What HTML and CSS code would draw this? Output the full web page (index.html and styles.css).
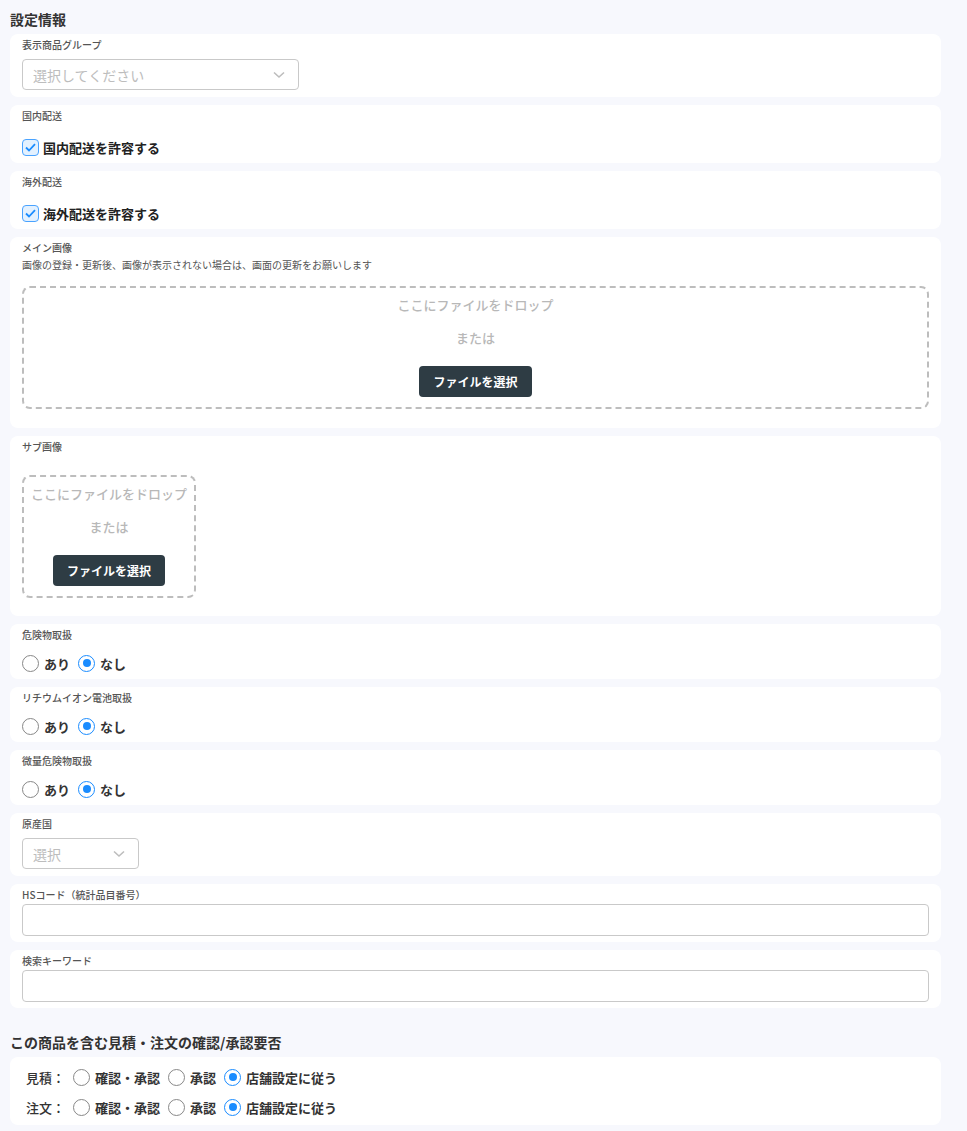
FILE: index.html
```html
<!DOCTYPE html>
<html lang="ja">
<head>
  <meta charset="UTF-8">
  <title>設定情報</title>
  <link rel="stylesheet" href="styles.css">
</head>
<body>

  <div class="page">
    <h2 class="section-title">設定情報</h2>

    <div class="card card-select">
      <div class="label">表示商品グループ</div>
      <div class="select select-wide">
        <span class="placeholder">選択してください</span>
        <svg class="chevron" width="12" height="8" viewBox="0 0 12 8"><path d="M1 1.5 L6 6 L11 1.5" fill="none" stroke="#bdbdbd" stroke-width="1.6"/></svg>
      </div>
    </div>

    <div class="card card-check">
      <div class="label">国内配送</div>
      <label class="check-row">
        <span class="checkbox"><svg width="11" height="9" viewBox="0 0 11 9"><path d="M1 4.5 L4 7.5 L10 1.2" fill="none" stroke="#1a8cff" stroke-width="1.8"/></svg></span>
        国内配送を許容する
      </label>
    </div>

    <div class="card card-check">
      <div class="label">海外配送</div>
      <label class="check-row">
        <span class="checkbox"><svg width="11" height="9" viewBox="0 0 11 9"><path d="M1 4.5 L4 7.5 L10 1.2" fill="none" stroke="#1a8cff" stroke-width="1.8"/></svg></span>
        海外配送を許容する
      </label>
    </div>

    <div class="card card-upload">
      <div class="label label-tight">メイン画像</div>
      <div class="note">画像の登録・更新後、画像が表示されない場合は、画面の更新をお願いします</div>
      <div class="dropzone">
        <p class="drop-text">ここにファイルをドロップ</p>
        <p class="drop-or">または</p>
        <button class="file-button">ファイルを選択</button>
      </div>
    </div>

    <div class="card card-upload card-sub">
      <div class="label">サブ画像</div>
      <div class="dropzone dropzone-small">
        <p class="drop-text">ここにファイルをドロップ</p>
        <p class="drop-or">または</p>
        <button class="file-button">ファイルを選択</button>
      </div>
    </div>

    <div class="card card-radio">
      <div class="label">危険物取扱</div>
      <div class="radio-row">
        <span class="radio"></span><span class="radio-text">あり</span>
        <span class="radio checked"></span><span class="radio-text">なし</span>
      </div>
    </div>

    <div class="card card-radio">
      <div class="label">リチウムイオン電池取扱</div>
      <div class="radio-row">
        <span class="radio"></span><span class="radio-text">あり</span>
        <span class="radio checked"></span><span class="radio-text">なし</span>
      </div>
    </div>

    <div class="card card-radio">
      <div class="label">微量危険物取扱</div>
      <div class="radio-row">
        <span class="radio"></span><span class="radio-text">あり</span>
        <span class="radio checked"></span><span class="radio-text">なし</span>
      </div>
    </div>

    <div class="card card-select">
      <div class="label">原産国</div>
      <div class="select select-small">
        <span class="placeholder">選択</span>
        <svg class="chevron" width="12" height="8" viewBox="0 0 12 8"><path d="M1 1.5 L6 6 L11 1.5" fill="none" stroke="#bdbdbd" stroke-width="1.6"/></svg>
      </div>
    </div>

    <div class="card card-input">
      <div class="label">HSコード（統計品目番号）</div>
      <input class="text-input" type="text">
    </div>

    <div class="card card-input">
      <div class="label">検索キーワード</div>
      <input class="text-input" type="text">
    </div>

    <h2 class="section-title section-title-2">この商品を含む見積・注文の確認/承認要否</h2>

    <div class="card card-approval">
      <div class="approval-row">
        <span class="approval-label">見積：</span>
        <span class="radio"></span><span class="radio-text">確認・承認</span>
        <span class="radio"></span><span class="radio-text">承認</span>
        <span class="radio checked"></span><span class="radio-text">店舗設定に従う</span>
      </div>
      <div class="approval-row">
        <span class="approval-label">注文：</span>
        <span class="radio"></span><span class="radio-text">確認・承認</span>
        <span class="radio"></span><span class="radio-text">承認</span>
        <span class="radio checked"></span><span class="radio-text">店舗設定に従う</span>
      </div>
    </div>
  </div>

</body>
</html>
```

FILE: styles.css
```css
body {
  margin: 0;
  font-family: "Noto Sans CJK JP", "Noto Sans", sans-serif;
  background-color: #f7f8fd;
  color: #333;
}

.page {
  padding: 0 26px 0 10px;
}

.section-title {
  font-size: 14px;
  font-weight: 700;
  line-height: 20px;
  margin: 9px 0 5px;
  color: #333;
}

.section-title-2 {
  margin-top: 24px;
}

.card {
  background-color: #fff;
  border-radius: 8px;
  padding: 4px 12px 6px;
  margin-bottom: 8px;
}

.label {
  font-size: 10px;
  line-height: 14px;
  color: #555;
  font-weight: 500;
}

/* Select */
.card-select {
  padding-bottom: 7px;
}

.card-select .label {
  margin-bottom: 7px;
}

.select {
  box-sizing: border-box;
  height: 31px;
  border: 1px solid #c9c9c9;
  border-radius: 4px;
  display: flex;
  align-items: center;
  justify-content: space-between;
  padding: 0 13px 0 10px;
}

.select-wide {
  width: 277px;
}

.select-small {
  width: 117px;
}

.placeholder {
  font-size: 14px;
  color: #bdbdbd;
}

/* Checkbox */
.card-check .label {
  margin-bottom: 14px;
}

.check-row {
  display: flex;
  align-items: center;
  height: 20px;
  font-size: 13px;
  font-weight: 700;
  color: #222;
}

.checkbox {
  box-sizing: border-box;
  width: 17px;
  height: 17px;
  border: 1.5px solid #4aa3ff;
  border-radius: 4px;
  background-color: #e3f1ff;
  display: flex;
  align-items: center;
  justify-content: center;
  margin-right: 4px;
}

/* Upload */
.card-upload {
  padding-bottom: 19px;
}

.label-tight {
  margin-bottom: 3px;
}

.note {
  font-size: 10px;
  line-height: 14px;
  color: #555;
  margin-bottom: 14px;
}

.card-sub {
  padding-bottom: 18px;
}

.card-sub .label {
  margin-bottom: 21px;
}

.dropzone {
  box-sizing: border-box;
  height: 123px;
  border: 2px dashed #bdbdbd;
  border-radius: 8px;
  padding-top: 8px;
  text-align: center;
}

.dropzone-small {
  width: 174px;
}

.drop-text,
.drop-or {
  margin: 0;
  font-size: 13px;
  line-height: 18px;
  color: #b8b8b8;
  font-weight: 500;
  white-space: nowrap;
}

.drop-text {
  margin-bottom: 15px;
}

.drop-or {
  margin-bottom: 19px;
}

.file-button {
  height: 31px;
  padding: 0 14px;
  border: none;
  border-radius: 4px;
  background-color: #2e3c44;
  color: #fff;
  font-family: inherit;
  font-size: 12px;
  font-weight: 700;
  cursor: pointer;
}

/* Radio */
.card-radio .label {
  margin-bottom: 11px;
}

.radio-row {
  display: flex;
  align-items: center;
  height: 20px;
}

.radio {
  box-sizing: border-box;
  width: 17px;
  height: 17px;
  border: 1.5px solid #888;
  border-radius: 50%;
  display: inline-flex;
  align-items: center;
  justify-content: center;
  margin-right: 5px;
}

.radio.checked {
  border-color: #1a8cff;
}

.radio.checked::after {
  content: "";
  width: 8px;
  height: 8px;
  border-radius: 50%;
  background-color: #1a8cff;
}

.radio-text {
  font-size: 13px;
  font-weight: 700;
  color: #333;
  margin-right: 8px;
}

/* Text inputs */
.card-input .label {
  margin-bottom: 2px;
}

.text-input {
  display: block;
  box-sizing: border-box;
  width: 100%;
  height: 32px;
  border: 1px solid #c9c9c9;
  border-radius: 4px;
  font-family: inherit;
}

/* Approval */
.card-approval {
  padding: 5px 16px 3px;
}

.approval-row {
  display: flex;
  align-items: center;
  height: 30px;
}

.approval-label {
  font-size: 13px;
  color: #333;
  font-weight: 500;
  width: 47px;
}

.card-approval .radio-text {
  margin-right: 8px;
}
```
